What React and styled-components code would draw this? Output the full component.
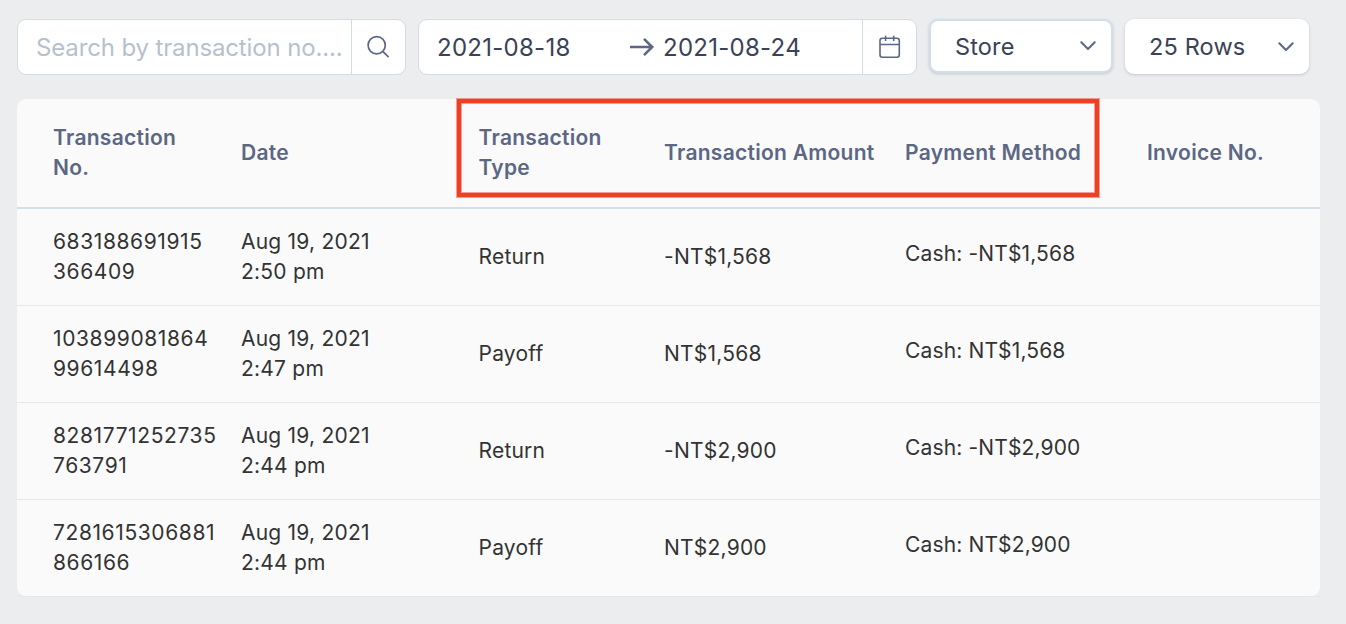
import styled, { createGlobalStyle } from "styled-components";

const GlobalStyle = createGlobalStyle`
  * {
    box-sizing: border-box;
  }

  body {
    margin: 0;
    background-color: #ecedef;
    font-family: Inter, "Liberation Sans", sans-serif;
  }
`;

const Page = styled.main`
  width: 1346px;
  height: 624px;
  padding: 19px 26px 0 17px;
  overflow: hidden;
  background-color: #ecedef;
`;

const Toolbar = styled.div`
  display: flex;
  align-items: flex-start;
  height: 56px;
`;

const InputGroup = styled.div`
  display: flex;
  width: ${(props) => props.$width}px;
  height: 56px;
  margin-right: 12px;
  background-color: #fff;
  border: 1px solid #d3dce6;
  border-radius: 9px;
`;

const InputBody = styled.div`
  flex: 1;
  min-width: 0;
  display: flex;
  align-items: center;
  padding-left: 18px;
  color: #3b4257;
  font-size: 24px;
  line-height: 54px;
  white-space: nowrap;
`;

const Placeholder = styled.span`
  padding-top: 1px;
  color: #b8bfcd;
  letter-spacing: -0.14px;
`;

const DateValue = styled.span`
  padding-top: 1px;
  letter-spacing: 0.27px;
`;

const DateRange = styled.div`
  display: grid;
  grid-template-columns: 192px 34px auto;
  align-items: center;
`;

const InputButton = styled.button`
  display: flex;
  align-items: center;
  justify-content: center;
  width: 54px;
  padding: 0;
  border: 0;
  border-left: 1px solid #d3dce6;
  background: none;
`;

const Select = styled.button`
  display: flex;
  align-items: center;
  justify-content: space-between;
  width: ${(props) => (props.$outlined ? "184px" : "183.5px")};
  height: ${(props) => (props.$outlined ? 54 : 55)}px;
  margin-right: ${(props) => (props.$outlined ? 12 : 0)}px;
  padding: ${(props) => (props.$outlined ? "0 15px 0 24px" : "0 15px 0 24px")};
  border: ${(props) => (props.$outlined ? "2px solid #d3dfe8" : "0")};
  border-radius: 9px;
  background-color: #fff;
  box-shadow: 0 1px 3px rgba(60, 66, 87, 0.22);
  color: #3b4257;
  font-family: inherit;
  font-size: 23.5px;
  letter-spacing: 0.15px;
`;

const Table = styled.div`
  position: relative;
  width: 1303px;
  height: 497px;
  margin-top: 24px;
  background-color: #fafafa;
  border-radius: 9px;
`;

const Row = styled.div`
  display: grid;
  grid-template-columns: 188px 237.5px 185.5px 241px 242px 1fr;
  align-items: center;
  height: 97px;
  padding-left: 36px;
  border-bottom: 1px solid #e6e8ec;
  color: #333;
  font-size: 21px;
  line-height: 30px;
  letter-spacing: 0.22px;

  &:last-child {
    border-bottom-color: transparent;
  }
`;

const HeaderRow = styled(Row)`
  height: 110px;
  border-bottom: 2px solid #d3dfe8;
  color: #5c6784;
  font-weight: 600;
  letter-spacing: 0.28px;
`;

const Cell = styled.div`
  white-space: pre-line;
`;

const NumberCell = styled(Cell)`
  letter-spacing: 0.6px;
`;

const PaymentCell = styled(Cell)`
  padding-bottom: 6px;
  letter-spacing: 0.14px;
`;

const Highlight = styled.div`
  position: absolute;
  top: 0;
  left: 440px;
  width: 642px;
  height: 98px;
  border: 4px solid #ed4025;
  box-shadow: 0 0 0 1px rgba(237, 64, 37, 0.5), inset 0 0 0 1px rgba(237, 64, 37, 0.5);
  pointer-events: none;
`;

const SearchIcon = () => (
  <svg width="24" height="24" viewBox="0 0 24 24" fill="none" stroke="#5c6784" strokeWidth="1.7">
    <circle cx="9.7" cy="10.3" r="8.6" />
    <path d="M15.8 16.3 21.6 22.1" />
  </svg>
);

const CalendarIcon = () => (
  <svg width="24" height="24" viewBox="0 0 24 24" fill="none" stroke="#5c6784" strokeWidth="1.6">
    <rect x="2" y="3.2" width="19.3" height="19" rx="2.4" />
    <path d="M2 9.5h19.3M7.6 0.7v5.3M15.7 0.7v5.3" />
  </svg>
);

const ArrowIcon = () => (
  <svg width="26" height="20" viewBox="0 0 26 20" fill="none" stroke="#5c6784" strokeWidth="2.6">
    <path d="M1 10h22.5M15 1.8l8.2 8.2-8.2 8.2" />
  </svg>
);

const Chevron = () => (
  <svg width="16" height="10" viewBox="0 0 16 10" fill="none" stroke="#5c6784" strokeWidth="2">
    <path d="M1.3 1.2 8 8l6.7-6.8" strokeLinecap="round" strokeLinejoin="round" />
  </svg>
);

const columns = ["Transaction\nNo.", "Date", "Transaction\nType", "Transaction Amount", "Payment Method", "Invoice No."];

const transactions = [
  { no: "683188691915\n366409", date: "Aug 19, 2021\n2:50 pm", type: "Return", amount: "-NT$1,568" },
  { no: "103899081864\n99614498", date: "Aug 19, 2021\n2:47 pm", type: "Payoff", amount: "NT$1,568" },
  { no: "8281771252735\n763791", date: "Aug 19, 2021\n2:44 pm", type: "Return", amount: "-NT$2,900" },
  { no: "7281615306881\n866166", date: "Aug 19, 2021\n2:44 pm", type: "Payoff", amount: "NT$2,900" },
];

const App = () => {
  return (
    <>
      <GlobalStyle />
      <Page>
        <Toolbar>
          <InputGroup $width={389}>
            <InputBody>
              <Placeholder>Search by transaction no....</Placeholder>
            </InputBody>
            <InputButton>
              <SearchIcon />
            </InputButton>
          </InputGroup>
          <InputGroup $width={499}>
            <InputBody>
              <DateRange>
                <DateValue>2021-08-18</DateValue>
                <ArrowIcon />
                <DateValue>2021-08-24</DateValue>
              </DateRange>
            </InputBody>
            <InputButton>
              <CalendarIcon />
            </InputButton>
          </InputGroup>
          <Select $outlined>
            Store
            <Chevron />
          </Select>
          <Select>
            25 Rows
            <Chevron />
          </Select>
        </Toolbar>
        <Table>
          <HeaderRow>
            {columns.map((column) => (
              <Cell key={column}>{column}</Cell>
            ))}
          </HeaderRow>
          {transactions.map((transaction) => (
            <Row key={transaction.no}>
              <NumberCell>{transaction.no}</NumberCell>
              <Cell>{transaction.date}</Cell>
              <Cell>{transaction.type}</Cell>
              <Cell>{transaction.amount}</Cell>
              <PaymentCell>Cash: {transaction.amount}</PaymentCell>
              <Cell />
            </Row>
          ))}
          <Highlight />
        </Table>
      </Page>
    </>
  );
};

export default App;
